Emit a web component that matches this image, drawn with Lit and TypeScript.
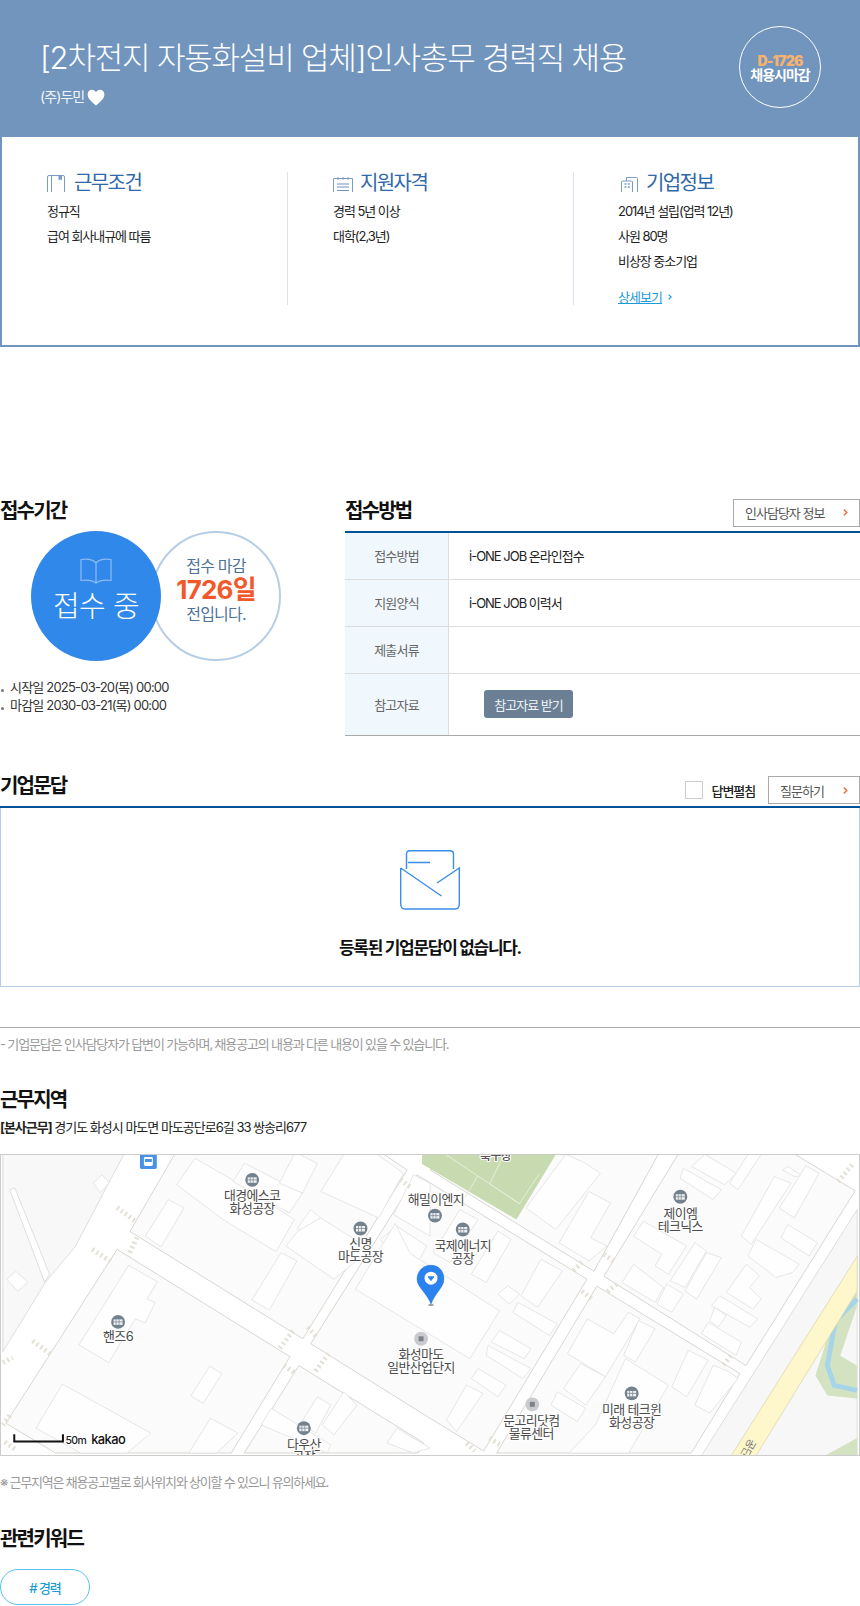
import { LitElement, html, css, svg } from "lit";
import { customElement } from "lit/decorators.js";

type P = number[];
const z6 = (a: P) => a.map((v, i) => (i % 2 ? v / 3 - 14 : v / 3));
const z7 = (a: P) => a.map((v, i) => (i % 2 ? v / 3 - 14 : 430 + v / 3));

const blocks: P[] = [
  [173, 0, 128, 78, 302, 186, 407, 16, 383, 0],
  [115, 96, 289, 204, 230, 301, 53, 301, 3, 271],
  [417, 21, 588, 126, 484, 299, 430, 266, 310, 191],
  [430, 16, 557, 0, 660, 0, 595, 118],
  [680, 0, 605, 123, 748, 213, 858, 37, 797, 0],
  [598, 133, 742, 221, 693, 301, 497, 301],
  [298, 213, 424, 291, 418, 301, 243, 301],
];
const bld: P[] = [
  ...[
    [580, 55, 525, 135, 665, 240, 825, 337, 880, 240, 720, 135],
    [730, 70, 695, 125, 865, 220, 905, 160],
    [500, 180, 430, 290, 478, 322, 547, 205],
    [840, 340, 752, 483, 805, 513, 888, 365],
    [880, 43, 835, 130, 905, 160, 950, 70, 895, 43],
    [930, 210, 960, 235, 925, 290, 890, 265],
    [960, 235, 1110, 330, 1000, 420, 855, 320, 890, 275],
    [1030, 43, 960, 155, 1135, 235, 1210, 100, 1130, 43],
    [1190, 260, 1140, 300, 1230, 415, 1280, 320],
    [1240, 105, 1180, 225, 1290, 290, 1290, 130],
    [380, 378, 230, 618, 320, 672, 400, 540, 430, 552, 460, 490, 435, 480, 467, 428],
    [625, 683, 568, 772, 605, 795, 662, 705],
    [180, 737, 100, 870, 235, 945, 375, 945, 447, 885],
    [627, 840, 562, 945, 645, 945, 710, 885],
    [950, 775, 900, 855, 945, 885, 990, 800],
    [1030, 760, 965, 860, 1000, 890, 1070, 800],
    [810, 810, 780, 860, 980, 945, 990, 920],
    [1190, 870, 1160, 915, 1240, 945, 1290, 930],
  ].map(z6),
  [355, 136, 470, 206, 500, 158, 410, 100, 395, 70],
  ...[
    [205, 275, 245, 300, 170, 430, 125, 405],
    [90, 210, 145, 240, 60, 370, 10, 340],
    [335, 360, 400, 395, 325, 505, 275, 470],
    [235, 440, 270, 465, 240, 495, 205, 465],
    [265, 490, 385, 555, 360, 590, 250, 520],
    [210, 575, 305, 630, 285, 660, 185, 610],
    [175, 620, 305, 690, 280, 720, 170, 650],
    [145, 690, 230, 740, 205, 775, 125, 720],
    [110, 740, 160, 765, 80, 880, 50, 845],
    [460, 65, 515, 100, 380, 270, 290, 205, 410, 43],
    [480, 155, 545, 190, 485, 295, 535, 320, 480, 365, 390, 310],
    [765, 85, 880, 150, 855, 180, 755, 115],
    [830, 43, 925, 100, 890, 135, 790, 80],
    [960, 43, 1000, 43, 930, 150, 905, 130],
    [1080, 80, 1125, 108, 1100, 110, 1065, 90],
    [1135, 78, 1175, 100, 1100, 235, 1055, 205],
    [1040, 110, 1090, 130, 970, 315, 940, 290],
    [1080, 255, 1170, 310, 1145, 350, 1060, 295],
    [985, 300, 1115, 375, 1095, 400, 1045, 415, 960, 350],
    [955, 375, 995, 410, 965, 445, 1000, 480, 975, 510, 895, 460],
    [875, 470, 990, 540, 965, 565, 850, 500],
    [860, 505, 895, 530, 870, 565, 845, 545],
    [840, 550, 940, 610, 925, 650, 820, 585],
    [800, 310, 835, 335, 770, 445, 725, 425],
    [835, 340, 880, 355, 805, 480, 770, 455],
    [615, 375, 705, 445, 680, 490, 580, 430],
    [715, 435, 765, 465, 730, 520, 685, 495],
    [645, 245, 775, 320, 720, 405, 680, 380, 700, 345, 615, 290],
    [475, 540, 415, 645, 530, 715, 635, 540, 600, 520, 555, 585],
    [630, 545, 680, 570, 620, 670, 585, 650],
    [590, 660, 720, 740, 600, 945, 420, 945, 500, 860],
    [455, 675, 530, 715, 470, 800, 403, 750],
    [385, 760, 470, 810, 445, 850, 365, 800],
    [780, 635, 840, 665, 775, 775, 730, 745],
    [855, 680, 905, 700, 930, 720, 845, 825, 800, 800],
  ].map(z7),
];
const walks: P[] = [
  [115, 54, 135, 69], [135, 84, 126, 103], [90, 96, 110, 109], [30, 188, 50, 203],
  [292, 178, 277, 198], [328, 201, 313, 221], [307, 174, 315, 183], [283, 213, 295, 221],
  [400, 26, 410, 33], [583, 109, 573, 119], [605, 101, 617, 109], [618, 131, 608, 139],
  [583, 138, 593, 146], [733, 203, 725, 213], [855, 11, 840, 29], [490, 286, 502, 294],
  [467, 291, 475, 299], [0, 273, 8, 262], [0, 210, 10, 205], [2, 290, 12, 297],
];
const pois: { x: number; iy: number; lx?: number; lines: string[]; ly: number; soft?: boolean }[] = [
  { x: 251, iy: 26, lines: ["대경에스코", "화성공장"], ly: 42 },
  { x: 360, iy: 75, lines: ["신명", "마도공장"], ly: 90 },
  { x: 435, iy: 62, lx: 436, lines: ["해밀이엔지"], ly: 46 },
  { x: 463, iy: 76, lines: ["국제에너지", "공장"], ly: 92 },
  { x: 682, iy: 43, lines: ["제이엠", "테크닉스"], ly: 60 },
  { x: 116, iy: 169, lines: ["핸즈6"], ly: 184 },
  { x: 421, iy: 186, lines: ["화성마도", "일반산업단지"], ly: 202, soft: true },
  { x: 303, iy: 276, lines: ["다우산", "공장"], ly: 292 },
  { x: 533, iy: 252, lx: 532, lines: ["문고리닷컴", "물류센터"], ly: 268, soft: true },
  { x: 633, iy: 241, lines: ["미래 테크윈", "화성공장"], ly: 257 },
];

const pts = (a: P) => a.join(" ");

const chevron = html`<svg class="chev" width="5" height="9" viewBox="0 0 5 9"><path d="M.8 1.500 3.800 4.500 .8 7.500" fill="none" stroke="#f0693a" stroke-width="1.400"/></svg>`;

@customElement("app-root")
export class AppRoot extends LitElement {
  static styles = css`
    :host { display: block; width: 860px; height: 1606px; overflow: hidden; background: #fff; color: #222;
      font-family: Inter, "Noto Sans CJK KR", "Noto Sans", sans-serif; font-size: 13px; letter-spacing: -1px; }
    * { box-sizing: border-box; }
    .hero { height: 137px; background: #7195bd; display: flex; justify-content: space-between; padding: 26px 39px 0 40px; color: #fff; }
    .hero h1 { margin: 12px 0 0; font-size: 31px; line-height: 40px; font-weight: 300; letter-spacing: -1.2px; white-space: nowrap; }
    .company { display: flex; align-items: center; gap: 3px; margin-top: 9px; font-size: 14px; line-height: 20px; color: #f1f5f9; font-weight: 400; letter-spacing: -0.9px; }
    .dday { width: 82px; height: 82px; border: 1px solid #fff; border-radius: 50%; display: flex; flex-direction: column; align-items: center; justify-content: center; font-weight: 700; font-size: 14px; line-height: 14px; letter-spacing: -1px; padding-top: 1px; }
    .dday b { color: #f6b26e; font-size: 14px; letter-spacing: -0.8px; }
    .info { height: 210px; border: 2px solid #7195bd; border-top: 0; display: grid; grid-template-columns: 285px 286px 1fr; padding-top: 35px; }
    .col { height: 133px; padding-left: 45px; border-left: 1px solid #dbe4ee; }
    .col:first-child { border-left: 0; }
    .col:nth-child(3) { padding-left: 44px; }
    .col h3 { margin: 0 0 5px; height: 22px; display: flex; align-items: center; gap: 9px; font-size: 20px; line-height: 22px; font-weight: 400; color: #2f68ab; letter-spacing: -1.6px; }
    .col h3 svg { align-self: flex-end; margin-bottom: 2px; }
    .col:nth-child(2) h3 { gap: 7px; }
    .col:nth-child(3) h3 { gap: 8px; }
    .col:nth-child(3) h3 svg { margin-left: 3px; }
    .col p { margin: 0; height: 25px; line-height: 25px; font-size: 13px; color: #222; letter-spacing: -1.05px; white-space: nowrap; }
    .more { margin-top: 10px; display: flex; align-items: center; gap: 6px; height: 25px; }
    .more a { color: #1d9bd8; text-decoration: underline; font-size: 13px; }
    .row { margin-top: 151px; display: grid; grid-template-columns: 345px 515px; }
    .title { margin: 0; font-size: 20px; line-height: 26px; font-weight: 700; color: #111; letter-spacing: -1.8px; }
    .circles { position: relative; height: 130px; margin: 7px 0 0 31px; display: flex; }
    .blue { width: 130px; height: 130px; border-radius: 50%; background: #3188eb; color: #fff; display: flex; flex-direction: column; align-items: center; position: relative; z-index: 1; padding-top: 27px; font-size: 29px; line-height: 38px; letter-spacing: -0.5px; font-weight: 300; }
    .blue span { margin-top: 4px; }
    .ring { width: 130px; height: 130px; margin-left: -10px; border: 2px solid #b6cde4; border-radius: 50%; display: flex; flex-direction: column; align-items: center; justify-content: center; font-size: 16px; line-height: 24px; color: #4f7399; padding: 0 0 13px 0; font-weight: 400; letter-spacing: -0.8px; }
    .ring b { color: #f2592a; font-size: 26px; line-height: 24px; font-weight: 700; letter-spacing: -0.8px; }
    .dates { margin: 17px 0 0; padding: 0; list-style: none; font-size: 13px; line-height: 18px; color: #333; font-weight: 400; letter-spacing: -0.8px; }
    .dates li { padding-left: 10px; position: relative; white-space: nowrap; }
    .dates li::before { content: ""; position: absolute; left: 1px; top: 11px; width: 3px; height: 3px; border-radius: 50%; background: #777; }
    .head { display: flex; justify-content: space-between; align-items: center; height: 33px; }
    .head .title { margin-top: -7px; }
    .tools { display: flex; align-items: center; margin-top: -4px; }
    .btn { height: 28px; border: 1px solid #aaa; display: flex; justify-content: space-between; align-items: center; padding: 0 11px; color: #555; font-size: 13px; background: #fff; }
    .btn.hr { width: 127px; }
    .btn.q { width: 92px; }
    .table { border-top: 2px solid #00529b; border-bottom: 1px solid #aaa; }
    .tr { display: grid; grid-template-columns: 104px 1fr; height: 47px; border-bottom: 1px solid #ddd; }
    .tr:last-child { height: 61px; border-bottom: 0; }
    .th { background: #f1f8fd; border-right: 1px solid #ddd; display: flex; align-items: center; justify-content: center; color: #666; letter-spacing: -0.8px; padding-bottom: 1px; }
    .td { display: flex; align-items: center; padding: 0 0 1px 20px; color: #222; }
    .dl { margin-left: 15px; width: 89px; height: 28px; border-radius: 3px; background: #6b8095; color: #eef2f6; display: flex; align-items: center; justify-content: center; }
    .qa { margin-top: 40px; }
    .qa .head { height: 30px; align-items: center; }
    .qa .head .title { margin-top: -10px; }
    .qa .tools { margin-top: 0; align-self: flex-start; }
    .check { width: 18px; height: 18px; border: 1px solid #ccc; margin: 0 9px 0 2px; }
    .lbl { font-weight: 500; margin-right: 13px; color: #222; font-size: 13px; letter-spacing: -1.1px; }
    .empty { border-top: 2px solid #00529b; }
    .box { height: 179px; border: 1px solid #b5cde5; border-top: 0; display: flex; flex-direction: column; align-items: center; padding-top: 42px; }
    .box p { margin: 25px 0 0; font-size: 17px; line-height: 26px; font-weight: 700; color: #111; letter-spacing: -1.3px; }
    .note { margin-top: 40px; border-top: 1px solid #aaa; padding-top: 6px; font-size: 13px; line-height: 20px; color: #999; letter-spacing: -1.15px; white-space: nowrap; }
    .area { margin-top: 33px; }
    .addr { font-size: 13px; line-height: 20px; margin-top: 4px; color: #222; letter-spacing: -1px; white-space: nowrap; }
    .addr b { font-weight: 700; }
    .map { display: block; width: 860px; height: 302px; margin-top: 17px; border: 1px solid #ccc; }
    .map text { font-family: Inter, "Noto Sans CJK KR", sans-serif; letter-spacing: -0.6px; }
    .note2 { margin-top: 16px; font-size: 13px; line-height: 20px; color: #999; letter-spacing: -1.2px; white-space: nowrap; }
    .kw { margin-top: 34px; }
    .pill { margin-top: 17px; width: 90px; height: 36px; border: 1px solid #5ac0ee; border-radius: 18px; display: flex; align-items: center; justify-content: center; color: #1d9bd8; font-size: 13px; font-weight: 500; }
  `;

  private poi(p: (typeof pois)[number]) {
    const fill = p.soft ? "#c9cbce" : "#74828e";
    const inner = p.soft
      ? svg`<rect x="${p.x - 2.5}" y="${p.iy - 2.5}" width="5" height="5" fill="#7d838a"/>`
      : svg`<rect x="${p.x - 4.5}" y="${p.iy - 2.5}" width="9" height="5.5" fill="#eef0f1"/><path d="M${p.x - 2} ${p.iy - 2.5}v5.5M${p.x + 1} ${p.iy - 2.5}v5.5M${p.x - 4.5} ${p.iy}h9" stroke="#74828e" stroke-width=".7"/>`;
    const lx = p.lx ?? p.x;
    return svg`
      <circle cx="${p.x}" cy="${p.iy}" r="7" fill="${fill}"/>${inner}
      ${p.lines.map(
        (t, i) => svg`<text x="${lx}" y="${p.ly + i * 13 + 4.5}" text-anchor="middle" font-size="13" fill="#4a4a4a" stroke="#fff" stroke-width="2" paint-order="stroke">${t}</text>`
      )}`;
  }

  private map() {
    return html`<svg class="map" viewBox="0 1 860 302" xmlns="http://www.w3.org/2000/svg">
      <rect width="860" height="304" fill="#fff"/>
      <path d="M0 0H122L73 93 43 129 0 199Z" fill="#f8f8f8" stroke="#d5d2cc" stroke-width=".7"/>
      <path d="M7 36 12 34 47 121 42 129Z" fill="#fff" stroke="#d5d2cc" stroke-width=".7"/>
      <path d="M100 21 107 29 98 39 91 29Z M13 118 25 129 15 138 4 126Z" fill="#fff" stroke="#ddd" stroke-width=".7"/>
      <path d="M860 56V304H703Z" fill="#f7f7f7" stroke="#d5d2cc" stroke-width=".7"/>
      <path d="M860 133 833 176 818 223 830 243 860 246V213L843 203 860 153Z" fill="#d3e3c2"/>
      <path d="M860 146 838 168 830 213 837 233 860 238" fill="none" stroke="#a6d5ea" stroke-width="5"/>
      <path d="M827 304 860 286V304Z" fill="#d3e3c2"/>
      <path d="M860 103 733 304H758L860 138Z" fill="#fdf7cb" stroke="#d9d2a8" stroke-width=".7"/>
      ${blocks.map((b) => svg`<polygon points="${pts(b)}" fill="#fbfbfb" stroke="#cfccc5" stroke-width=".8"/>`)}
      <path d="M422 0H557L517 66 422 10Z" fill="#c8dbb0"/>
      <path d="M445 0 520 50 540 20M478 22 465 44M505 0 490 30 520 50" fill="none" stroke="#e4eed9" stroke-width="1"/>
      ${bld.map((b) => svg`<polygon points="${pts(b)}" fill="#fefefe" stroke="#dcdcdc" stroke-width=".7"/>`)}
      ${walks.map((w) => svg`<line x1="${w[0]}" y1="${w[1]}" x2="${w[2]}" y2="${w[3]}" stroke="#e4e0d6" stroke-width="5" stroke-dasharray="2 3"/>`)}
      <text x="496" y="6" text-anchor="middle" font-size="12" font-weight="500" fill="#555" stroke="#fff" stroke-width="2" paint-order="stroke">축구장</text>
      <text transform="translate(752 286) rotate(120)" font-size="11" fill="#777">공단로</text>
      ${pois.map((p) => this.poi(p))}
      <ellipse cx="431" cy="152" rx="3" ry="1" fill="#999"/>
      <path d="M431 112C423 112 417 118 417 126 417 134 427 140 431 151 435 140 444 134 444 126 444 118 439 112 431 112Z" fill="#2a82ee" stroke="#1a6fd8" stroke-width=".5"/>
      <circle cx="431" cy="125" r="6.500" fill="#fff"/>
      <path d="M428 123.500H434L431 127.500Z" fill="#2a82ee" stroke="#2a82ee" stroke-width=".8" stroke-linejoin="round"/>
      <rect x="138" y="0" width="17" height="15" rx="1.500" fill="#4a90e8"/>
      <rect x="142" y="3" width="9" height="9" rx="1.500" fill="#fff"/>
      <rect x="143" y="5" width="7" height="3" fill="#4a90e8"/>
      <path d="M11.500 282V289.500H60.500V282" fill="none" stroke="#111" stroke-width="2"/>
      <text x="63" y="292" font-size="10.500" font-weight="500" fill="#222">50m</text>
      <text x="89" y="292" font-size="13" font-weight="500" fill="#111">kakao</text>
    </svg>`;
  }

  render() {
    return html`
      <section class="hero">
        <div>
          <h1>[2차전지 자동화설비 업체]인사총무 경력직 채용</h1>
          <div class="company">(주)두민
            <svg width="18" height="17" viewBox="0 0 18 17"><path d="M9 16.500C5 13 .6 10 .6 5.300.6 2.600 2.600.8 5 .8 6.700.8 8.200 1.700 9 3.200 9.800 1.700 11.300.8 13 .8 15.400.8 17.400 2.600 17.400 5.300 17.400 10 13 13 9 16.500Z" fill="#fff"/></svg>
          </div>
        </div>
        <div class="dday"><b>D-1726</b><span>채용시마감</span></div>
      </section>
      <section class="info">
        <div class="col">
          <h3><svg width="18" height="17" viewBox="0 0 18 17" fill="none" stroke="#7a9cc4"><path d="M.5 17V2Q.5 .5 2 .5H16Q17.500 .5 17.500 2V17M4.500 17V.5"/><path d="M11.500 .5H15V5.500L13.250 4.300 11.500 5.500Z" fill="#7a9cc4" stroke="none"/></svg>근무조건</h3>
          <p>정규직</p><p>급여 회사내규에 따름</p>
        </div>
        <div class="col">
          <h3><svg width="20" height="15" viewBox="0 0 20 15" fill="none" stroke="#7a9cc4"><path d="M.5 15V1.500H19.500V15M5 0V3M10 0V3M15 0V3"/><path d="M4 7H16M4 10H16M4 13.500H16" stroke="#6d93bf"/></svg>지원자격</h3>
          <p>경력 5년 이상</p><p>대학(2,3년)</p>
        </div>
        <div class="col">
          <h3><svg width="17" height="15" viewBox="0 0 17 15" fill="none" stroke="#7a9cc4"><path d="M5.500 4V.5H15.500Q16.500.5 16.500 1.500V15M.5 15V5Q.5 4 1.500 4H10.500Q11.500 4 11.500 5V15"/><path d="M3.500 7H5.500M6.800 7H8.800M3.500 10H5.500M6.800 10H8.800" stroke-width="1.500"/></svg>기업정보</h3>
          <p>2014년 설립(업력 12년)</p><p>사원 80명</p><p>비상장 중소기업</p>
          <div class="more"><a>상세보기</a><svg width="4" height="6" viewBox="0 0 4 6"><path d="M.6.6 3.200 3 .6 5.400" fill="none" stroke="#1d9bd8" stroke-width="1.200"/></svg></div>
        </div>
      </section>
      <section class="row">
        <div>
          <h2 class="title">접수기간</h2>
          <div class="circles">
            <div class="blue">
              <svg width="32" height="26" viewBox="0 0 32 26" fill="none" stroke="#8dbcf2" stroke-width="1.200"><path d="M16 5C13 1.500 7 .6 1 1.500V22.500C7 21.500 12 22 16 25 20 22 25 21.500 31 22.500V1.500C25 .6 19 1.500 16 5ZM16 5V25"/></svg>
              <span>접수 중</span>
            </div>
            <div class="ring"><span>접수 마감</span><b>1726일</b><span>전입니다.</span></div>
          </div>
          <ul class="dates"><li>시작일 2025-03-20(목) 00:00</li><li>마감일 2030-03-21(목) 00:00</li></ul>
        </div>
        <div>
          <div class="head"><h2 class="title">접수방법</h2><div class="tools"><div class="btn hr">인사담당자 정보${chevron}</div></div></div>
          <div class="table">
            <div class="tr"><div class="th">접수방법</div><div class="td">i-ONE JOB 온라인접수</div></div>
            <div class="tr"><div class="th">지원양식</div><div class="td">i-ONE JOB 이력서</div></div>
            <div class="tr"><div class="th">제출서류</div><div class="td"></div></div>
            <div class="tr"><div class="th">참고자료</div><div class="td"><div class="dl">참고자료 받기</div></div></div>
          </div>
        </div>
      </section>
      <section class="qa">
        <div class="head"><h2 class="title">기업문답</h2><div class="tools"><div class="check"></div><span class="lbl">답변펼침</span><div class="btn q">질문하기${chevron}</div></div></div>
        <div class="empty"><div class="box">
          <svg width="60" height="60" viewBox="0 0 60 60" fill="none" stroke="#3a8ee8" stroke-width="1.400"><path d="M6.500 19V4Q6.500 .7 10 .7H50Q53.500.7 53.500 4V19M8 12.500H30M.7 18V54Q.7 59 5 59H55Q59.300 59 59.300 54V18L37 33M.7 18 41.500 46"/></svg>
          <p>등록된 기업문답이 없습니다.</p>
        </div></div>
      </section>
      <div class="note">- 기업문답은 인사담당자가 답변이 가능하며, 채용공고의 내용과 다른 내용이 있을 수 있습니다.</div>
      <section class="area">
        <h2 class="title">근무지역</h2>
        <div class="addr"><b>[본사근무]</b> 경기도 화성시 마도면 마도공단로6길 33 쌍송리677</div>
        ${this.map()}
      </section>
      <div class="note2">※ 근무지역은 채용공고별로 회사위치와 상이할 수 있으니 유의하세요.</div>
      <section class="kw">
        <h2 class="title">관련키워드</h2>
        <div class="pill"># 경력</div>
      </section>
    `;
  }
}
